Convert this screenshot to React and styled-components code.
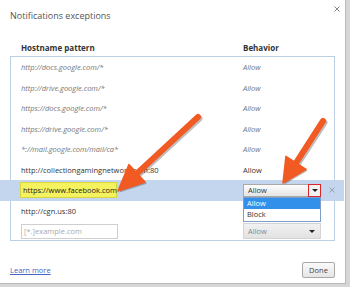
import React from 'react'
import styled, { createGlobalStyle, css } from 'styled-components'

const GlobalStyle = createGlobalStyle`
  html, body {
    margin: 0;
    padding: 0;
    background: #d6d6d6;
    font-family: 'Open Sans', 'Noto Sans', sans-serif;
  }
`

const FONT = "'Open Sans', 'Noto Sans', sans-serif"

const rules = [
  { pattern: 'http://docs.google.com/*', italic: true },
  { pattern: 'http://drive.google.com/*', italic: true },
  { pattern: 'https://docs.google.com/*', italic: true },
  { pattern: 'https://drive.google.com/*', italic: true },
  { pattern: '*://mail.google.com/mail/ca*', italic: true },
  { pattern: 'http://collectiongamingnetwork.com:80', italic: false }
]

const ArrowMark = ({ from, to, head = 26, half = 12 }) => {
  const dx = to[0] - from[0]
  const dy = to[1] - from[1]
  const len = Math.hypot(dx, dy)
  const ux = dx / len
  const uy = dy / len
  const bx = to[0] - ux * head
  const by = to[1] - uy * head
  const nx = -uy
  const ny = ux
  const pts = [
    [bx + nx * half, by + ny * half],
    to,
    [bx - nx * half, by - ny * half]
  ]
    .map(p => p.join(','))
    .join(' ')
  return (
    <g>
      <g transform='translate(1.5,1.5)' opacity='0.25'>
        <line x1={from[0]} y1={from[1]} x2={bx} y2={by} stroke='#000' strokeWidth='6' strokeLinecap='round' />
        <polygon points={pts} fill='#000' />
      </g>
      <line x1={from[0]} y1={from[1]} x2={bx + ux * 2} y2={by + uy * 2} stroke='#f15a22' strokeWidth='6' strokeLinecap='round' />
      <polygon points={pts} fill='#f15a22' stroke='#f15a22' strokeWidth='1.5' strokeLinejoin='round' />
    </g>
  )
}

const Cross = ({ size = 6, color = '#777' }) => (
  <svg width={size} height={size} viewBox='0 0 6 6'>
    <path d='M0.5 0.5 L5.5 5.5 M5.5 0.5 L0.5 5.5' stroke={color} strokeWidth='1' />
  </svg>
)

export default function App () {
  return (
    <>
      <GlobalStyle />
      <Dialog>
        <TitleBar>
          <Title>Notifications exceptions</Title>
          <Close>
            <Cross size={6} color='#888' />
          </Close>
        </TitleBar>
        <Content>
          <HeaderRow>
            <HeadCell>Hostname pattern</HeadCell>
            <HeadCell>Behavior</HeadCell>
          </HeaderRow>
          <ListBox>
            {rules.map(r => (
              <Row key={r.pattern}>
                <Cell italic={r.italic}>{r.pattern}</Cell>
                <Cell italic={r.italic}>Allow</Cell>
              </Row>
            ))}
            <Row selected>
              <PatternBox highlighted>https://www.facebook.com</PatternBox>
              <SelectWrap>
                <Select>
                  Allow
                  <DropButton>
                    <Caret />
                  </DropButton>
                </Select>
                <Menu>
                  <MenuItem active>Allow</MenuItem>
                  <MenuItem>Block</MenuItem>
                </Menu>
              </SelectWrap>
              <Remove>
                <Cross size={6} color='#9aa4ad' />
              </Remove>
            </Row>
            <Row>
              <Cell>http://cgn.us:80</Cell>
              <Cell />
            </Row>
            <Row>
              <PatternBox placeholder>[*.]example.com</PatternBox>
              <Select muted>
                Allow
                <Caret />
              </Select>
            </Row>
          </ListBox>
        </Content>
        <Footer>
          <LearnMore>Learn more</LearnMore>
          <DoneButton>Done</DoneButton>
        </Footer>
        <Annotations viewBox='0 0 350 287' width='350' height='287'>
          <ArrowMark from={[198, 117]} to={[118, 191]} />
          <ArrowMark from={[323, 121]} to={[283, 183]} head={24} half={12} />
        </Annotations>
      </Dialog>
    </>
  )
}

const Dialog = styled.div`
  position: relative;
  width: 346px;
  height: 284px;
  box-sizing: border-box;
  background: #fff;
  border-right: 1px solid #b9b9b9;
  border-bottom: 1px solid #b9b9b9;
  display: flex;
  flex-direction: column;
  font-family: ${FONT};
`

const TitleBar = styled.div`
  height: 30px;
  display: flex;
  align-items: center;
  justify-content: space-between;
  padding: 0 0 0 10px;
`

const Title = styled.div`
  font-size: 9px;
  color: #555;
`

const Close = styled.div`
  align-self: flex-start;
  display: flex;
  margin-top: 6px;
  margin-right: 5px;
`

const Content = styled.div`
  padding: 0 10px 0 10px;
`

const columns = css`
  display: grid;
  grid-template-columns: 222px 1fr;
  align-items: center;
`

const HeaderRow = styled.div`
  ${columns};
  height: 18px;
  margin-top: 8px;
  padding-left: 11px;
`

const HeadCell = styled.div`
  font-size: 8px;
  font-weight: 700;
  color: #333;
`

const ListBox = styled.div`
  border: 1px solid #bccfe3;
  height: 185px;
  box-sizing: border-box;
  display: flex;
  flex-direction: column;
`

const Row = styled.div`
  ${columns};
  height: 20.5px;
  flex: none;
  padding-left: 10px;
  position: relative;
  ${p =>
    p.selected &&
    css`
      background: #c4d5ee;
      margin: 0 -10px 0 -11px;
      padding-left: 20px;
      grid-template-columns: 223px 78px 1fr;
    `}
`

const Cell = styled.div`
  font-size: 7.5px;
  color: ${p => (p.italic ? '#777' : '#333')};
  font-style: ${p => (p.italic ? 'italic' : 'normal')};
  white-space: nowrap;
`

const PatternBox = styled.div`
  width: 97px;
  height: ${p => (p.highlighted ? 16 : 15)}px;
  box-sizing: border-box;
  display: flex;
  align-items: center;
  padding-left: 2px;
  font-size: 7.5px;
  white-space: nowrap;
  ${p =>
    p.highlighted
      ? css`
          background: #f4f25e;
          border: 1px solid #d8d640;
          color: #222;
        `
      : css`
          background: #fff;
          border: 1px solid #cfcfcf;
          color: #aaa;
        `}
`

const SelectWrap = styled.div`
  position: relative;
  width: 78px;
`

const Select = styled.div`
  width: 78px;
  height: ${p => (p.muted ? 16 : 13)}px;
  box-sizing: border-box;
  display: flex;
  align-items: center;
  justify-content: space-between;
  padding: 0 ${p => (p.muted ? 5 : 0)}px 0 4px;
  font-size: 7.5px;
  color: ${p => (p.muted ? '#888' : '#333')};
  border: 1px solid ${p => (p.muted ? '#d4d4d4' : '#a9a9a9')};
  background: ${p =>
    p.muted
      ? 'linear-gradient(#f1f1f1, #e2e2e2)'
      : 'linear-gradient(#fdfdfd, #e4e4e4)'};
`

const DropButton = styled.div`
  width: 13px;
  height: 13px;
  box-sizing: border-box;
  margin-right: -1px;
  border: 1px solid #d9262a;
  background: #f3f3f3;
  display: flex;
  align-items: center;
  justify-content: center;
`

const Caret = styled.span`
  width: 0;
  height: 0;
  border-left: 3px solid transparent;
  border-right: 3px solid transparent;
  border-top: 3px solid #222;
`

const Menu = styled.div`
  position: absolute;
  top: 100%;
  left: 0;
  width: 78px;
  box-sizing: border-box;
  border: 1px solid #7f9dc9;
  background: #fff;
  z-index: 2;
`

const MenuItem = styled.div`
  height: 11.5px;
  line-height: 11.5px;
  padding-left: 3px;
  font-size: 7.5px;
  color: ${p => (p.active ? '#fff' : '#333')};
  background: ${p => (p.active ? '#3390ea' : '#fff')};
`

const Remove = styled.div`
  display: flex;
  padding-left: 8px;
`

const Footer = styled.div`
  flex: 1;
  display: flex;
  align-items: flex-start;
  justify-content: space-between;
  padding: 21px 10px 0 10px;
`

const LearnMore = styled.a`
  font-size: 7.5px;
  color: #4766c4;
  text-decoration: underline;
  margin-top: 3px;
`

const DoneButton = styled.button`
  width: 33px;
  height: 16px;
  padding: 0;
  font-family: ${FONT};
  font-size: 7.5px;
  color: #444;
  border: 1px solid #a8a8a8;
  border-radius: 2px;
  background: linear-gradient(#fafafa, #e6e6e6);
`

const Annotations = styled.svg`
  position: absolute;
  left: 0;
  top: 0;
  pointer-events: none;
  overflow: visible;
`
